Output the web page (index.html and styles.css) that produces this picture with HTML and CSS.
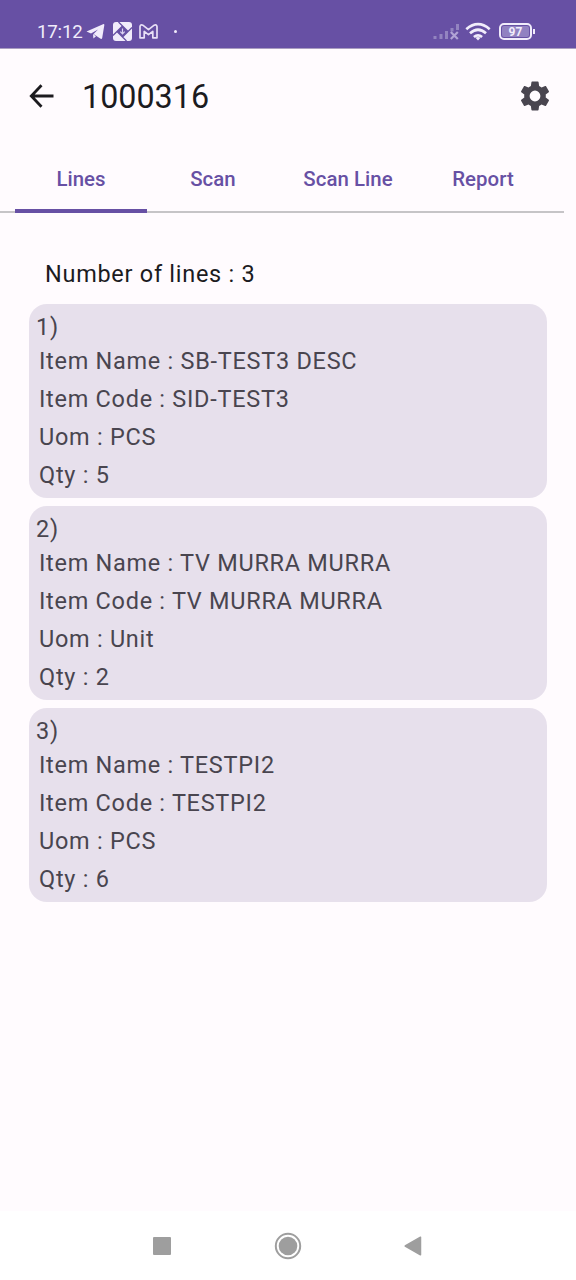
FILE: index.html
```html
<!DOCTYPE html>
<html lang="en">
<head>
<meta charset="utf-8">
<title>1000316</title>
<link rel="stylesheet" href="styles.css">
</head>
<body>
<div class="status">
  <span class="clock">17:12</span>
  <svg class="telegram" width="19" height="17" viewBox="0 0 19 17"><path d="M.5 8.500 17 1.200q1.600-.5 1.300 1.100L16.200 15q-.5 1.500-2 .6L7.500 11l4.500-4.500-7 3.900z" fill="#f1ecfb"/><path d="m7 11 3 2.300-2.600 2.300z" fill="#f1ecfb"/></svg>
  <svg class="app" width="19" height="19" viewBox="0 0 19 19"><rect width="19" height="19" rx="3" fill="#f1ecfb"/><path d="M9.500 4 15 9.500 9.500 15 4 9.500z" fill="#6750a4"/><path d="M5.500 0 15 9.500M19 5.500 9.500 15M13.500 19 4 9.500M0 13.500 9.500 4" stroke="#6750a4" stroke-width="1.300"/><path d="M9.500 6.500v5M7.300 9.600l2.200 2.200 2.200-2.200" fill="none" stroke="#ddd3f3" stroke-width="1.200"/></svg>
  <svg class="mail" width="19" height="15" viewBox="0 0 19 15"><path d="M1 13.800V2.700Q1.500.2 3.800 1.200L9.500 5.600l5.700-4.400Q17.500.2 18 2.700v11.100h-4.200V7.400L9.500 10.700 5.200 7.400v6.400z" fill="none" stroke="#e8e0f6" stroke-width="1.700" stroke-linejoin="round"/></svg>
  <span class="dot"></span>
  <span class="spacer"></span>
  <svg class="signal" width="27" height="17" viewBox="0 0 27 17"><path d="M2 13v3M8 11v5M13.500 8v8M19 5v3.500M24.500 1v6" stroke="#9384c0" stroke-width="3"/><path d="m17.800 9 7 7m0-7-7 7" stroke="#b1a3d5" stroke-width="2.200"/></svg>
  <svg class="wifi" width="26" height="19" viewBox="0 0 26 19"><g fill="none" stroke="#f1ecfb" stroke-width="2.700"><path d="M1.300 7.200q11.700-10 23.400 0"/><path d="M5 11.200q8-6.900 16 0"/><path d="M8.900 15q4.100-3.300 8.200 0"/></g><path d="m10.500 15.800 2.500 2.700 2.500-2.700q-2.500-1.800-5 0z" fill="#f1ecfb"/></svg>
  <span class="battery"><span class="level">97</span></span><span class="cap"></span>
</div>
<div class="bar">
  <svg class="back" width="26" height="24" viewBox="0 0 26 24"><path d="M24.500 12H3M12.500 1.300 2.300 12l10.200 10.700" fill="none" stroke="#1c1b1f" stroke-width="2.800"/></svg>
  <h1 class="title">1000316</h1>
  <svg class="gear" width="36" height="36" viewBox="0 0 24 24"><path fill="#49454f" d="M19.140 12.940c.04-.3.060-.61.060-.94 0-.32-.02-.64-.07-.94l2.030-1.580c.18-.14.230-.41.120-.61l-1.920-3.320c-.12-.22-.37-.29-.59-.22l-2.390.96c-.5-.38-1.030-.7-1.620-.94l-.36-2.540c-.04-.24-.24-.41-.48-.41h-3.840c-.24 0-.43.170-.47.410l-.36 2.540c-.59.240-1.130.57-1.620.94l-2.390-.96c-.22-.08-.47 0-.59.220L2.740 8.870c-.12.210-.08.470.12.610l2.030 1.580c-.05.300-.09.630-.09.940s.02.640.07.940l-2.030 1.580c-.18.140-.23.410-.12.610l1.920 3.320c.12.220.37.290.59.220l2.390-.96c.5.380 1.030.7 1.620.94l.36 2.540c.05.240.24.410.48.410h3.840c.24 0 .44-.17.470-.41l.36-2.540c.59-.24 1.130-.56 1.620-.94l2.390.96c.22.080.47 0 .59-.22l1.920-3.320c.12-.22.070-.47-.12-.61l-2.010-1.580zM12 15.600A3.600 3.600 0 1 1 12 8.400a3.600 3.600 0 0 1 0 7.200z"/></svg>
</div>
<div class="tabs">
  <div class="tab active">Lines</div><div class="tab">Scan</div><div class="tab wide">Scan Line</div><div class="tab">Report</div>
</div>
<main class="content">
  <p class="count">Number of lines : 3</p>
  <section class="card"><p class="index">1)</p><p class="row">Item Name : SB-TEST3 DESC</p><p class="row">Item Code : SID-TEST3</p><p class="row">Uom : PCS</p><p class="row">Qty : 5</p></section>
  <section class="card"><p class="index">2)</p><p class="row">Item Name : TV MURRA MURRA</p><p class="row">Item Code : TV MURRA MURRA</p><p class="row">Uom : Unit</p><p class="row">Qty : 2</p></section>
  <section class="card"><p class="index">3)</p><p class="row">Item Name : TESTPI2</p><p class="row">Item Code : TESTPI2</p><p class="row">Uom : PCS</p><p class="row">Qty : 6</p></section>
</main>
<nav class="nav">
  <svg class="recent" width="18" height="18" viewBox="0 0 18 18"><rect width="18" height="18" rx="1" fill="#9e9e9e"/></svg>
  <svg class="home" width="28" height="28" viewBox="0 0 28 28"><circle cx="14" cy="14" r="12.200" fill="none" stroke="#9e9e9e" stroke-width="2"/><circle cx="14" cy="14" r="9.300" fill="#9e9e9e"/></svg>
  <svg class="prev" width="18" height="20" viewBox="0 0 18 20"><path d="M1.200 10 16.500 1.200v17.600z" fill="#9e9e9e" stroke="#9e9e9e" stroke-width="1.500" stroke-linejoin="round"/></svg>
</nav>
</body>
</html>
```

FILE: styles.css
```css
* { box-sizing: border-box; }
body { margin: 0; width: 576px; height: 1280px; display: flex; flex-direction: column; overflow: hidden; background: #fffbfe; color: #1c1b1f; font-family: Roboto, sans-serif; }
p, h1 { margin: 0; font-weight: 400; }
svg { display: block; flex: none; }
.status { height: 48px; flex: none; display: flex; align-items: center; padding: 15px 42px 0 37px; background: #6750a4; color: #f1ecfb; box-shadow: 0 1px 0 #a99dc0; }
.clock { width: 49px; font-size: 18.700px; line-height: 20px; letter-spacing: -0.2px; }
.app { margin-left: 8px; }
.mail { margin-left: 7px; }
.dot { width: 3px; height: 3px; margin-left: 16px; border-radius: 50%; background: #f1ecfb; }
.spacer { flex: 1; }
.wifi { margin: 0 8px 0 5px; }
.battery { width: 33px; height: 17px; padding: 1px; border: 2px solid #f1ecfb; border-radius: 5px; }
.level { display: block; height: 11px; border-radius: 2px; background: #9181c1; font-size: 12px; font-weight: 700; line-height: 12px; text-align: center; }
.cap { width: 2px; height: 5px; margin-left: 1px; margin-right: -1px; background: #f1ecfb; }
.bar { height: 96px; flex: none; display: flex; align-items: center; padding: 0 23px 0 29px; }
.title { flex: 1; margin: 2px 0 0 27px; font-size: 32.3px; line-height: 41px; }
.gear { margin-top: -1px; }
.tabs { width: 564px; height: 69px; flex: none; display: flex; padding: 0 15px; border-bottom: 2px solid #c6c4c7; }
.tab { width: 132px; height: 69px; padding-top: 22px; border-bottom: 4px solid transparent; text-align: center; font-size: 20.4px; font-weight: 500; line-height: 26px; letter-spacing: 0.05px; color: #6750a4; }
.tab.active { border-color: #6750a4; }
.tab.wide { width: 138px; }
.content { flex: 1; display: flex; flex-direction: column; gap: 8px; padding: 44px 29px 0; font-size: 23.47px; line-height: 35px; letter-spacing: 0.73px; }
.count { height: 39px; padding-left: 16px; }
.card { width: 518px; height: 194px; padding: 6px 10px 0; border-radius: 18px; background: #e7e0ec; color: #49454f; }
.index { margin-left: -3px; height: 32px; }
.row { height: 38px; line-height: 38px; }
.nav { height: 69px; flex: none; display: flex; align-items: center; padding: 0 0 0 152.500px; background: #fff; }
.home { margin-left: 103.500px; }
.prev { margin-left: 102px; }
```
